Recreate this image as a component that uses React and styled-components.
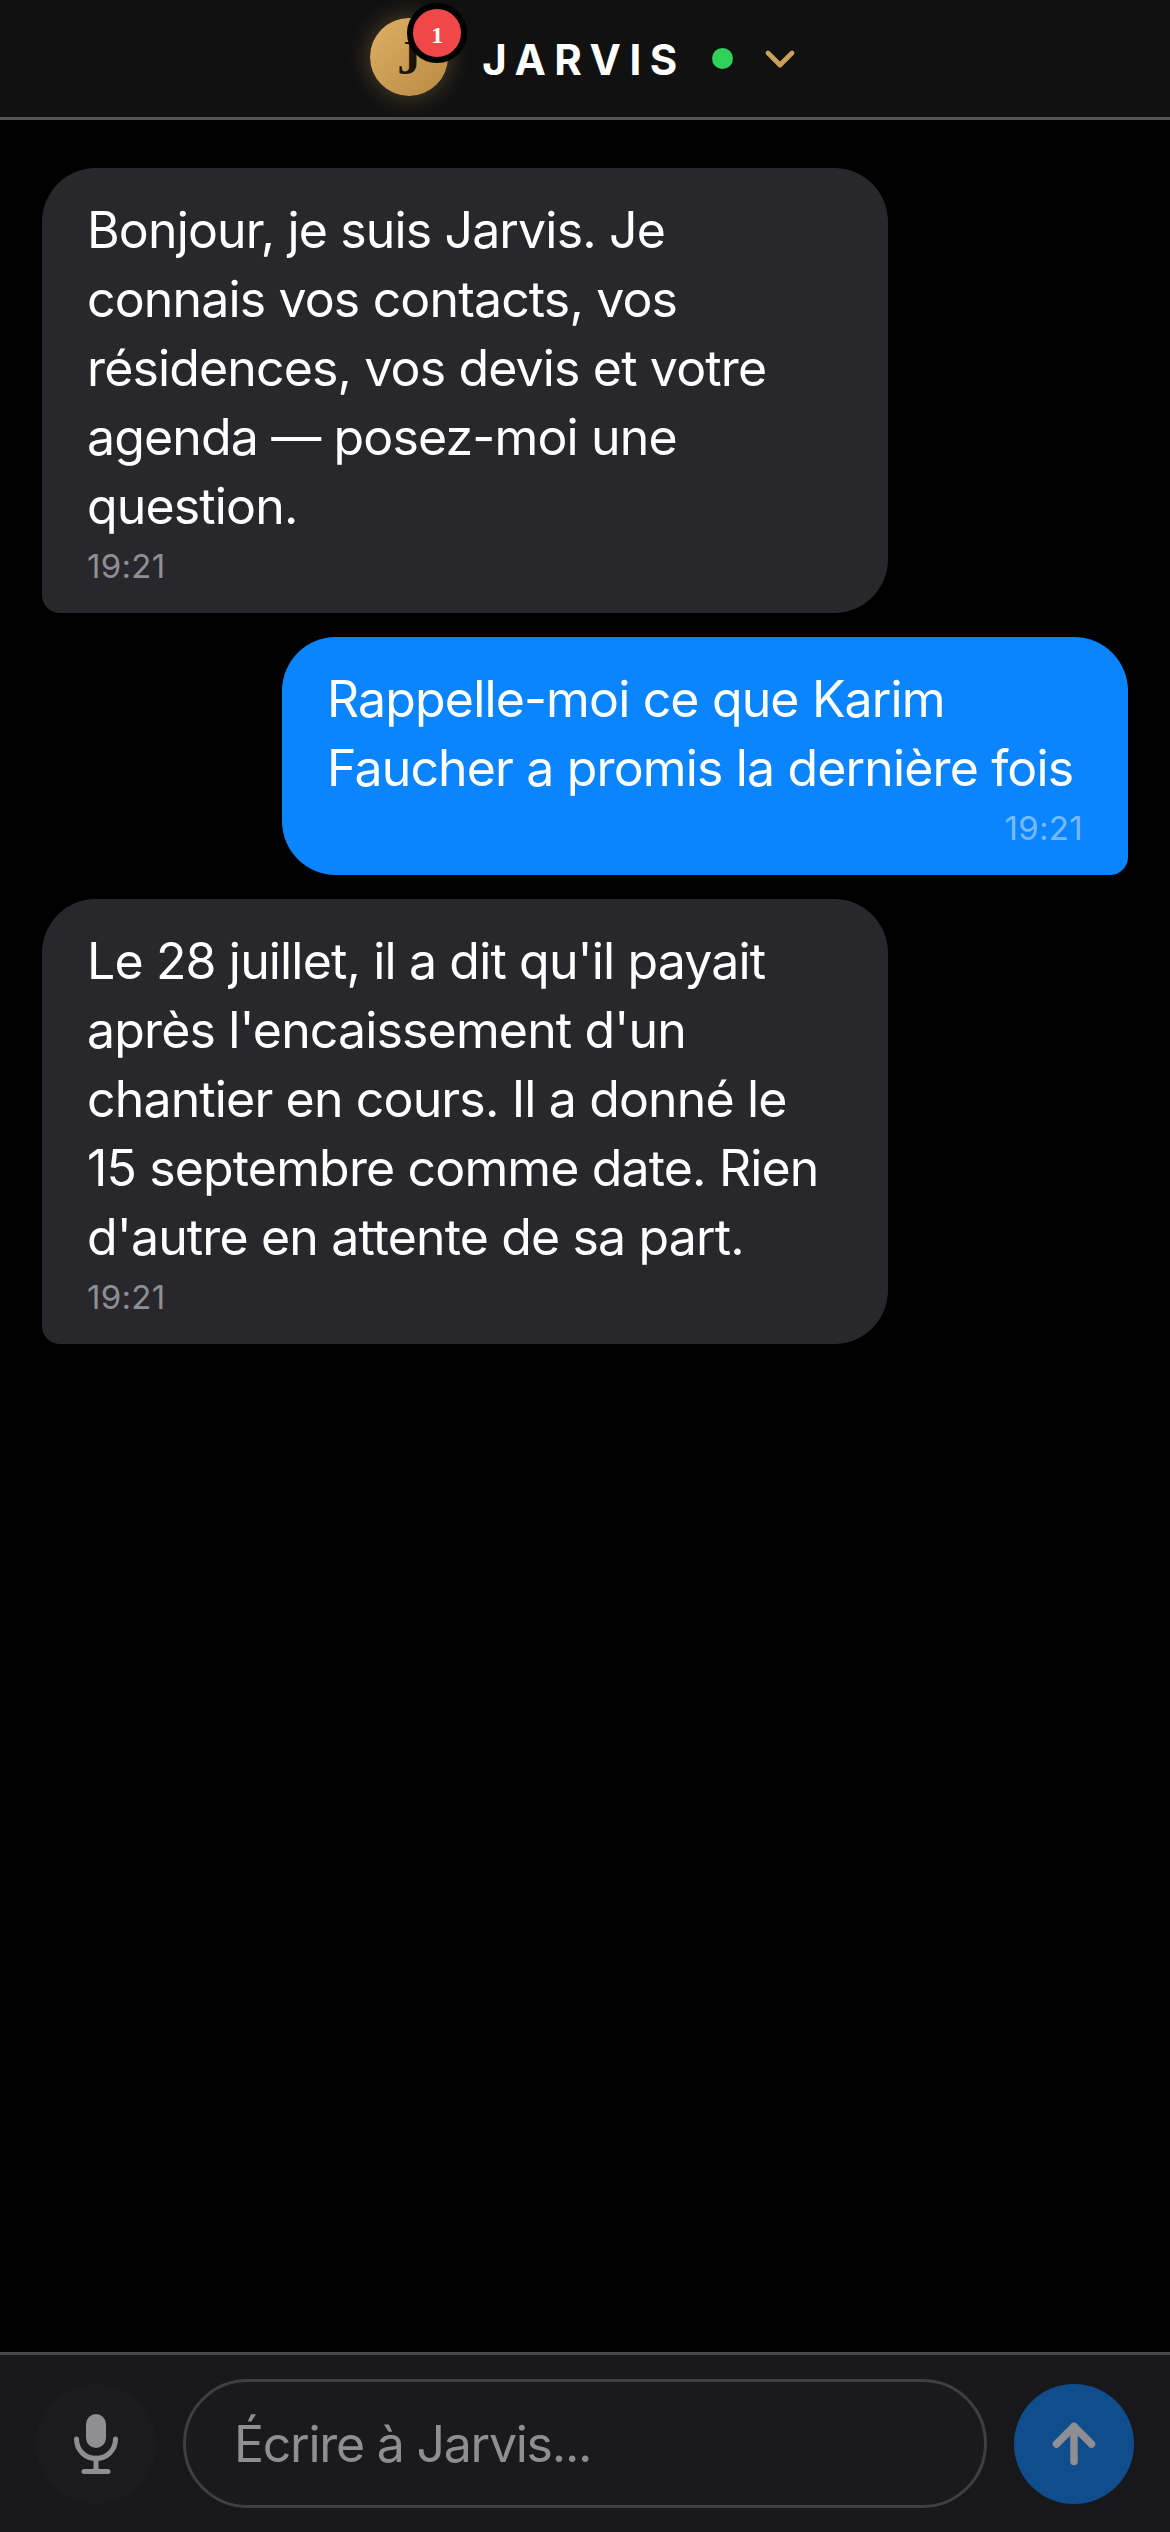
import React from 'react';
import styled, { createGlobalStyle } from 'styled-components';
import { ChevronDown, ArrowUp } from 'lucide-react';

const GlobalStyle = createGlobalStyle`
  html, body {
    margin: 0;
    padding: 0;
    background: #000;
  }
  * {
    box-sizing: border-box;
  }
`;

const Page = styled.div`
  display: flex;
  flex-direction: column;
  width: 1170px;
  height: 2532px;
  background: #000;
  font-family: Inter, "Liberation Sans", sans-serif;
  color: #fff;
`;

const Header = styled.header`
  display: flex;
  align-items: center;
  justify-content: center;
  flex-shrink: 0;
  height: 120px;
  padding-left: 4px;
  background: #111112;
  border-bottom: 3px solid #545456;
`;

const Avatar = styled.div`
  position: relative;
  display: flex;
  align-items: center;
  justify-content: center;
  width: 78px;
  height: 78px;
  margin: -3px 34px 0 0;
  border-radius: 50%;
  background: linear-gradient(135deg, #dcb065, #b98a42);
  box-shadow: 0 0 24px rgba(212, 168, 90, 0.35);
  color: #1c1408;
  font-family: "Liberation Serif", serif;
  font-size: 48px;
  font-weight: 700;
`;

const Badge = styled.span`
  position: absolute;
  top: -15px;
  right: -19px;
  display: flex;
  align-items: center;
  justify-content: center;
  width: 60px;
  height: 60px;
  padding-top: 4px;
  border: 6px solid #000;
  border-radius: 50%;
  background: #f04848;
  color: #fff;
  font-size: 24px;
`;

const Title = styled.h1`
  margin: 3px 0 0 0;
  font-size: 42px;
  font-weight: 700;
  line-height: 1;
  letter-spacing: 8.5px;
`;

const StatusDot = styled.span`
  width: 21px;
  height: 21px;
  margin: 0 23px 0 26px;
  border-radius: 50%;
  background: #30d158;
`;

const Chevron = styled(ChevronDown)`
  color: #c8a05a;
`;

const Thread = styled.main`
  display: flex;
  flex: 1;
  flex-direction: column;
  gap: 24px;
  padding: 48px 42px;
`;

const Bubble = styled.div`
  align-self: ${(p) => (p.$mine ? 'flex-end' : 'flex-start')};
  width: 846px;
  padding: 28px 45px 27px;
  border-radius: ${(p) => (p.$mine ? '54px 54px 18px 54px' : '54px 54px 54px 18px')};
  background: ${(p) => (p.$mine ? '#0a84ff' : '#28282c')};
`;

const BubbleText = styled.div`
  font-size: 50px;
  line-height: 69px;
  letter-spacing: -0.85px;
`;

const Time = styled.div`
  margin-top: 5px;
  font-size: 33px;
  line-height: 40px;
  letter-spacing: 0.3px;
  text-align: ${(p) => (p.$mine ? 'right' : 'left')};
  color: ${(p) => (p.$mine ? 'rgba(255, 255, 255, 0.45)' : '#8e8e93')};
`;

const Composer = styled.footer`
  display: flex;
  align-items: center;
  flex-shrink: 0;
  gap: 27px;
  height: 180px;
  padding: 0 36px;
  background: #18181b;
  border-top: 3px solid #48484a;
`;

const RoundButton = styled.button`
  display: flex;
  align-items: center;
  justify-content: center;
  flex-shrink: 0;
  width: 120px;
  height: 120px;
  padding: 0;
  border: none;
  border-radius: 50%;
  background: ${(p) => (p.$primary ? '#0f4d8c' : '#1b1b1e')};
  color: #8e8e93;
`;

const MessageInput = styled.input`
  flex: 1;
  min-width: 0;
  height: 129px;
  padding: 0 48px;
  border: 3px solid #3f3f42;
  border-radius: 65px;
  background: #1a1a1d;
  color: #fff;
  font-family: inherit;
  font-size: 50px;
  letter-spacing: -1.25px;
  outline: none;
  &::placeholder {
    color: #8e8e93;
    opacity: 1;
  }
`;

const MicIcon = () => (
  <svg width="44" height="60" viewBox="0 0 44 60" fill="none">
    <rect x="12" y="0" width="20" height="34" rx="10" fill="currentColor" />
    <path
      d="M2.5 25c0 11 8.5 19.5 19.5 19.5S41.500 36 41.500 25"
      stroke="currentColor"
      strokeWidth="5"
      strokeLinecap="round"
    />
    <path d="M22 44v13M10 57.500h24" stroke="currentColor" strokeWidth="5" strokeLinecap="round" />
  </svg>
);

const messages = [
  {
    text: 'Bonjour, je suis Jarvis. Je connais vos contacts, vos résidences, vos devis et votre agenda — posez-moi une question.',
  },
  { mine: true, text: 'Rappelle-moi ce que Karim Faucher a promis la dernière fois' },
  {
    text: "Le 28 juillet, il a dit qu'il payait après l'encaissement d'un chantier en cours. Il a donné le 15 septembre comme date. Rien d'autre en attente de sa part.",
  },
];

export default function App() {
  return (
    <Page>
      <GlobalStyle />
      <Header>
        <Avatar>
          J<Badge>1</Badge>
        </Avatar>
        <Title>JARVIS</Title>
        <StatusDot />
        <Chevron size={48} strokeWidth={2.4} />
      </Header>
      <Thread>
        {messages.map((m, key) => (
          <Bubble key={key} $mine={m.mine}>
            <BubbleText>{m.text}</BubbleText>
            <Time $mine={m.mine}>19:21</Time>
          </Bubble>
        ))}
      </Thread>
      <Composer>
        <RoundButton aria-label="Micro">
          <MicIcon />
        </RoundButton>
        <MessageInput placeholder="Écrire à Jarvis..." />
        <RoundButton $primary aria-label="Envoyer">
          <ArrowUp size={60} strokeWidth={3} />
        </RoundButton>
      </Composer>
    </Page>
  );
}
